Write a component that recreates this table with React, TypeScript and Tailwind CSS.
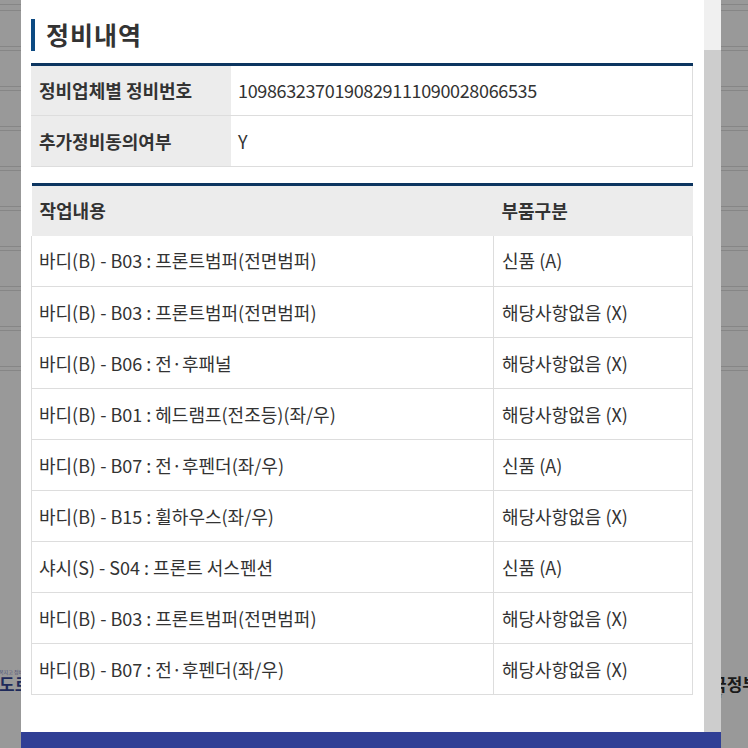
const works = [
  { name: '바디(B) - B03 : 프론트범퍼(전면범퍼)', part: '신품 (A)' },
  { name: '바디(B) - B03 : 프론트범퍼(전면범퍼)', part: '해당사항없음 (X)' },
  { name: '바디(B) - B06 : 전·후패널', part: '해당사항없음 (X)' },
  { name: '바디(B) - B01 : 헤드램프(전조등)(좌/우)', part: '해당사항없음 (X)' },
  { name: '바디(B) - B07 : 전·후펜더(좌/우)', part: '신품 (A)' },
  { name: '바디(B) - B15 : 휠하우스(좌/우)', part: '해당사항없음 (X)' },
  { name: '샤시(S) - S04 : 프론트 서스펜션', part: '신품 (A)' },
  { name: '바디(B) - B03 : 프론트범퍼(전면범퍼)', part: '해당사항없음 (X)' },
  { name: '바디(B) - B07 : 전·후펜더(좌/우)', part: '해당사항없음 (X)' },
];

const bgRows = [0, 1, 2, 3, 4, 5, 6, 7, 8];

const App = () => {
  return (
    <div className="relative w-[748px] h-[748px] overflow-hidden bg-[#999999] font-['Noto_Sans_CJK_KR','Noto_Sans',sans-serif]">
      {/* dimmed page behind the modal */}
      <div className="flex flex-col pt-[4px]">
        <div className="h-[7px] border-y border-[#868686]" />
        {bgRows.map((i) => (
          <div key={i} className="flex flex-col">
            <div className="h-[35px]" />
            <div className="h-[5px] border-y border-[#868686]" />
          </div>
        ))}
        <div className="mt-[298px] flex items-start justify-between">
          <div className="flex flex-col -ml-[1px]">
            <span className="text-[5px] leading-[6px] text-[#4a5075] whitespace-nowrap">복지고 정비</span>
            <span className="text-[17px] leading-[18px] font-bold text-[#1e2a5a] whitespace-nowrap">도로공</span>
          </div>
          <div className="flex flex-col -mr-[10px] mt-[6px]">
            <span className="text-[17px] leading-[18px] font-bold text-[#1a1a1a] whitespace-nowrap">국정부</span>
            <span className="text-[6px] leading-[6px] text-[#555] pl-[4px]">.kr</span>
          </div>
        </div>
      </div>

      {/* modal */}
      <div className="absolute left-[21px] top-0 w-[700px] h-[748px] flex flex-col bg-white">
        <div className="flex h-[732px]">
          <div className="flex-1 pl-[10px] pr-[10px] pt-[19px]">
            <h2 className="flex items-center h-[32px] border-l-[4px] border-[#0d4a82] pl-[11px] text-[25px] font-bold text-[#333] tracking-[1px]">
              정비내역
            </h2>

            <table className="mt-[12px] w-[662px] border-t-[3px] border-[#0c3560] border-collapse text-[18px] text-[#333]">
              <tbody>
                <tr className="h-[51px] border-b border-[#dddddd]">
                  <th className="w-[200px] bg-[#ececec] pl-[8px] text-left font-bold">정비업체별 정비번호</th>
                  <td className="pl-[7px] border-r border-[#dddddd] tracking-[-0.35px]">1098632370190829111090028066535</td>
                </tr>
                <tr className="h-[51px] border-b border-[#dddddd]">
                  <th className="w-[200px] bg-[#ececec] pl-[8px] text-left font-bold">추가정비동의여부</th>
                  <td className="pl-[7px] border-r border-[#dddddd]">Y</td>
                </tr>
              </tbody>
            </table>

            <table className="mt-[16px] w-[662px] border-t-[3px] border-[#0c3560] border-collapse text-[18px] text-[#333]">
              <thead>
                <tr className="h-[51px] bg-[#ececec]">
                  <th className="pl-[8px] text-left font-bold">작업내용</th>
                  <th className="w-[199px] pl-[8px] text-left font-bold">부품구분</th>
                </tr>
              </thead>
              <tbody>
                {works.map((w, i) => (
                  <tr key={i} className="h-[51px] border-b border-[#dddddd]">
                    <td className="pl-[7px] border-l border-[#dddddd]">{w.name}</td>
                    <td className="pl-[8px] border-x border-[#dddddd]">{w.part}</td>
                  </tr>
                ))}
              </tbody>
            </table>
          </div>
          {/* scrollbar */}
          <div className="w-[17px] flex flex-col bg-[#f0f0f0]">
            <div className="h-[50px]" />
            <div className="flex-1 bg-[#cdcdcd]" />
          </div>
        </div>
        <div className="h-[16px] bg-[#303f95]" />
      </div>
    </div>
  );
};

export default App;
